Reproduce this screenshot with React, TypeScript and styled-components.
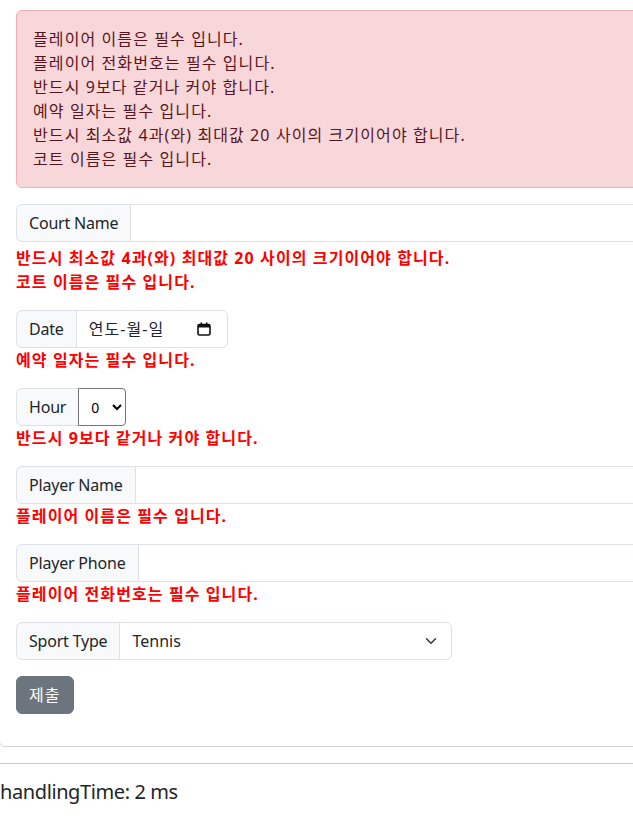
import React from 'react';
import styled, {createGlobalStyle} from 'styled-components';

const GlobalStyle = createGlobalStyle`
  html, body {
    margin: 0;
    padding: 0;
    overflow: hidden;
    background: #fff;
  }
  body {
    font-family: "Noto Sans", "Noto Sans CJK KR", sans-serif;
    font-size: 16px;
    line-height: 24px;
    color: #212529;
  }
  * { box-sizing: border-box; }
`

// korean text looks a bit wider in the original, so loosen it a little
const KO_SPACING = '1.1px'

const Page = styled.div`
  width: 900px;
`
const Card = styled.div`
  margin-top: -7px;
  margin-left: -1px;
  border: 1px solid rgba(0, 0, 0, 0.175);
  border-radius: 6px;
`
const CardBody = styled.div`
  padding: 16px;
`
const Alert = styled.div`
  padding: 16px;
  margin-bottom: 16px;
  background-color: #f8d7da;
  border: 1px solid #f1aeb5;
  border-radius: 6px;
  color: #58151c;
  letter-spacing: ${KO_SPACING};
`
const Field = styled.div`
  margin-bottom: 16px;
`
const InputGroup = styled.div<{$width?: number}>`
  display: flex;
  align-items: stretch;
  width: ${p => (p.$width ? `${p.$width}px` : '100%')};
  height: 38px;
`
const GroupLabel = styled.span`
  display: flex;
  align-items: center;
  padding: 6px 12px;
  background-color: #f8f9fa;
  border: 1px solid #dee2e6;
  border-radius: 6px 0 0 6px;
  white-space: nowrap;
  letter-spacing: -0.2px;
  color: #212529;
`
const TextInput = styled.input`
  flex: 1;
  min-width: 0;
  margin-left: -1px;
  padding: 6px 12px;
  font: inherit;
  border: 1px solid #dee2e6;
  border-radius: 0 6px 6px 0;
  outline: none;
`
const DateBox = styled.div`
  flex: 1;
  display: flex;
  align-items: center;
  justify-content: space-between;
  margin-left: -1px;
  padding: 6px 16px 6px 12px;
  border: 1px solid #dee2e6;
  border-radius: 0 6px 6px 0;
  color: #212529;
  letter-spacing: ${KO_SPACING};
`
const HourSelect = styled.select`
  width: 48px;
  height: 38px;
  margin-left: -1px;
  padding: 0 4px 0 8px;
  font-family: "Noto Sans", sans-serif;
  font-size: 14px;
  color: #000;
  background: #fff;
  border: 1px solid #767676;
  border-radius: 0 4px 4px 0;
`
const chevron = `url("data:image/svg+xml,%3csvg xmlns='http://www.w3.org/2000/svg' viewBox='0 0 16 16'%3e%3cpath fill='none' stroke='%23343a40' stroke-linecap='round' stroke-linejoin='round' stroke-width='2' d='m2 5 6 6 6-6'/%3e%3c/svg%3e")`
const SportSelect = styled.select`
  flex: 1;
  margin-left: -1px;
  padding: 6px 36px 6px 12px;
  font: inherit;
  color: #212529;
  appearance: none;
  background-color: #fff;
  background-image: ${chevron};
  background-repeat: no-repeat;
  background-position: right 12px center;
  background-size: 16px 12px;
  border: 1px solid #dee2e6;
  border-radius: 0 6px 6px 0;
`
const Feedback = styled.div<{$gap?: number}>`
  margin-top: ${p => p.$gap ?? 0}px;
  color: red;
  font-weight: 700;
  letter-spacing: ${KO_SPACING};
`
const SubmitButton = styled.button`
  margin-bottom: 16px;
  padding: 6px 12px;
  font: inherit;
  letter-spacing: ${KO_SPACING};
  color: #fff;
  background-color: #6c757d;
  border: 1px solid #6c757d;
  border-radius: 6px;
`
const Rule = styled.hr`
  margin: 16px 0;
  border: 0;
  border-top: 1px solid #ccc;
`
const Timing = styled.div`
  font-size: 20px;
  line-height: 24px;
  letter-spacing: -0.4px;
`

const CalendarIcon = () => (
  <svg width="14" height="14" viewBox="0 0 14 14">
    <rect x="1" y="2.5" width="12" height="10.5" rx="1.5" fill="none" stroke="#111" strokeWidth="1.6" />
    <rect x="1" y="2.5" width="12" height="3" fill="#111" />
    <rect x="3.5" y="0.5" width="1.6" height="3" fill="#111" />
    <rect x="8.9" y="0.5" width="1.6" height="3" fill="#111" />
  </svg>
)

const alerts = [
  '플레이어 이름은 필수 입니다.',
  '플레이어 전화번호는 필수 입니다.',
  '반드시 9보다 같거나 커야 합니다.',
  '예약 일자는 필수 입니다.',
  '반드시 최소값 4과(와) 최대값 20 사이의 크기이어야 합니다.',
  '코트 이름은 필수 입니다.',
]

function App() {
  return (
    <Page>
      <GlobalStyle />
      <Card>
        <CardBody>
          <Alert>
            {alerts.map((a, i) => <div key={`alert${i}`}>{a}</div>)}
          </Alert>

          <Field>
            <InputGroup>
              <GroupLabel>Court Name</GroupLabel>
              <TextInput type="text" />
            </InputGroup>
            <Feedback $gap={4}>반드시 최소값 4과(와) 최대값 20 사이의 크기이어야 합니다.</Feedback>
            <Feedback>코트 이름은 필수 입니다.</Feedback>
          </Field>

          <Field>
            <InputGroup $width={212}>
              <GroupLabel>Date</GroupLabel>
              <DateBox>
                <span>연도-월-일</span>
                <CalendarIcon />
              </DateBox>
            </InputGroup>
            <Feedback>예약 일자는 필수 입니다.</Feedback>
          </Field>

          <Field>
            <InputGroup $width={108}>
              <GroupLabel>Hour</GroupLabel>
              <HourSelect defaultValue="0">
                {Array(24).fill(0).map((a, i) => <option key={`h${i}`} value={i}>{i}</option>)}
              </HourSelect>
            </InputGroup>
            <Feedback>반드시 9보다 같거나 커야 합니다.</Feedback>
          </Field>

          <Field>
            <InputGroup>
              <GroupLabel>Player Name</GroupLabel>
              <TextInput type="text" />
            </InputGroup>
            <Feedback>플레이어 이름은 필수 입니다.</Feedback>
          </Field>

          <Field>
            <InputGroup>
              <GroupLabel>Player Phone</GroupLabel>
              <TextInput type="text" />
            </InputGroup>
            <Feedback>플레이어 전화번호는 필수 입니다.</Feedback>
          </Field>

          <Field>
            <InputGroup $width={436}>
              <GroupLabel>Sport Type</GroupLabel>
              <SportSelect defaultValue="TENNIS">
                <option value="TENNIS">Tennis</option>
                <option value="BADMINTON">Badminton</option>
              </SportSelect>
            </InputGroup>
          </Field>

          <SubmitButton type="submit">제출</SubmitButton>
        </CardBody>
      </Card>
      <Rule />
      <Timing>handlingTime: 2 ms</Timing>
    </Page>
  )
}

export default App
